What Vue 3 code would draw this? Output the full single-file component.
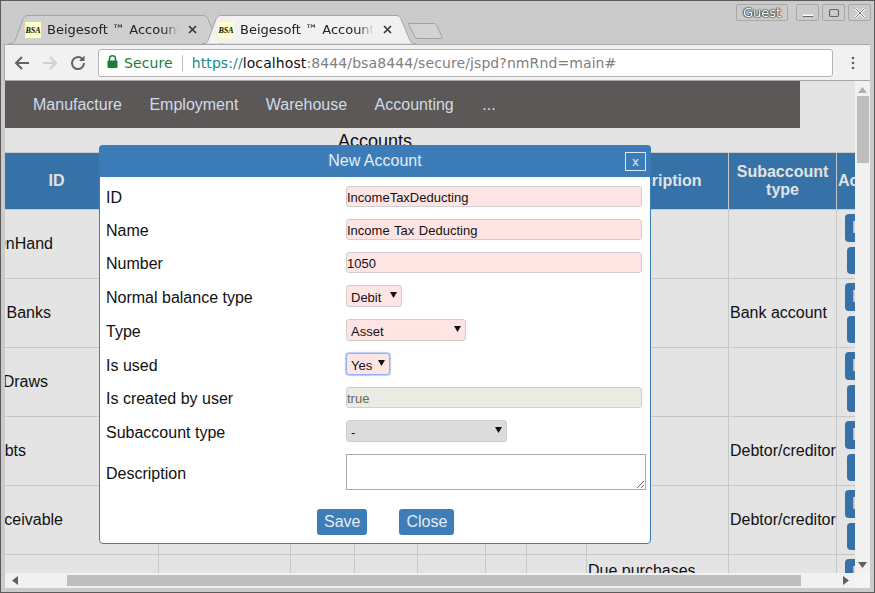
<script setup>
const tabs = [
  { id: 1, active: false },
  { id: 2, active: true }
]
const columns = [
  { label: 'ID', width: 204 },
  { label: 'Name', width: 132 },
  { label: 'Number', width: 64 },
  { label: 'Normal', width: 63 },
  { label: 'Type', width: 68 },
  { label: 'Used', width: 41 },
  { label: 'User', width: 60 },
  { label: 'Description', width: 142 },
  { label: 'Subaccount type', width: 108 },
  { label: 'Actions', width: 120 }
]
const rows = [
  { id: 'CashOnHand', pad: 104, sub: '', desc: '' },
  { id: 'Cash in Banks', pad: 106, sub: 'Bank account', desc: '' },
  { id: 'Owners Draws', pad: 109, sub: '', desc: '' },
  { id: 'Bad Debts', pad: 131, sub: 'Debtor/creditor', desc: '' },
  { id: 'AccountsReceivable', pad: 94, sub: 'Debtor/creditor', desc: '' },
  { id: '', pad: 2, sub: '', desc: 'Due purchases', tall: true }
]
const fields = [
  { label: 'ID', kind: 'input', value: 'IncomeTaxDeducting' },
  { label: 'Name', kind: 'input', value: 'Income Tax Deducting' },
  { label: 'Number', kind: 'input', value: '1050' },
  { label: 'Normal balance type', kind: 'select', value: 'Debit', cls: 'sel-debit' },
  { label: 'Type', kind: 'select', value: 'Asset', cls: 'sel-type' },
  { label: 'Is used', kind: 'select', value: 'Yes', cls: 'sel-used' },
  { label: 'Is created by user', kind: 'readonly', value: 'true' },
  { label: 'Subaccount type', kind: 'select', value: '-', cls: 'sel-sub' },
  { label: 'Description', kind: 'textarea', value: '' }
]
</script>

<template>
  <div class="window">
    <header class="titlebar">
      <div class="tabs">
        <div v-for="t in tabs" :key="t.id" class="tab" :class="{ active: t.active }">
          <svg class="tab-bg" width="214" height="29" viewBox="0 0 214 29">
            <path d="M0 28.5 L2 28.5 C4 28.5 5 27.5 6 25.5 L14 4 C15 2 16 0.5 19 0.5 L194 0.5 C197 0.5 198 2 199 4 L208 25.5 C209 27.5 210 28.5 212 28.5 L214 28.5" :fill="t.active ? '#f1f1f1' : '#cfcfcf'" stroke="#a5a5a5" />
          </svg>
          <span class="favicon">BSA</span>
          <span class="tab-title">Beigesoft ™ Accounting</span>
          <svg class="tab-x" width="9" height="9" viewBox="0 0 9 9"><path d="M1 1 L8 8 M8 1 L1 8" stroke="#333" stroke-width="1.6" /></svg>
        </div>
        <svg class="newtab" width="36" height="18" viewBox="0 0 36 18">
          <path d="M1 1.5 L25 1.5 C27 1.5 28 2 29 4 L34 15 C34.5 16 34 16.5 33 16.5 L10 16.5 C8 16.5 7.5 16 7 15 L1 3 C0.5 2 0.5 1.5 1 1.5 Z" fill="#d2d2d2" stroke="#a0a0a0" />
        </svg>
      </div>
      <div class="winctrls">
        <span class="guest">Guest</span>
        <span class="wbtn"><svg width="12" height="12" viewBox="0 0 12 12"><path d="M1 8.5 H11" stroke="#fff" stroke-width="2" /><path d="M1 9.5 H11" stroke="#666" /></svg></span>
        <span class="wbtn"><svg width="12" height="12" viewBox="0 0 12 12"><rect x="1.5" y="2.5" width="9" height="7" rx="1.5" fill="none" stroke="#666" stroke-width="1.2" /></svg></span>
        <span class="wbtn"><svg width="12" height="12" viewBox="0 0 12 12"><path d="M1.5 1.5 L10.5 10.5 M10.5 1.5 L1.5 10.5" stroke="#fff" stroke-width="2.4" /><path d="M1.5 1.5 L10.5 10.5 M10.5 1.5 L1.5 10.5" stroke="#777" stroke-width="1" /></svg></span>
      </div>
    </header>

    <div class="toolbar">
      <svg class="tb-icon" width="18" height="18" viewBox="0 0 18 18"><path d="M16 9 H3 M9 3 L3 9 L9 15" fill="none" stroke="#5f6368" stroke-width="2" /></svg>
      <svg class="tb-icon" width="18" height="18" viewBox="0 0 18 18"><path d="M2 9 H15 M9 3 L15 9 L9 15" fill="none" stroke="#d0d0d0" stroke-width="2" /></svg>
      <svg class="tb-icon" width="18" height="18" viewBox="0 0 18 18"><path d="M15 9 A6 6 0 1 1 13 4.6" fill="none" stroke="#5f6368" stroke-width="2" /><path d="M15.5 1.5 V7 H10 Z" fill="#5f6368" /></svg>
      <div class="omnibox">
        <svg class="lock" width="11" height="13" viewBox="0 0 11 13"><path d="M2.5 6 V3.8 A3 3 0 0 1 8.5 3.8 V6" fill="none" stroke="#188038" stroke-width="1.5" /><rect x="0.5" y="5.5" width="10" height="7.5" rx="1" fill="#188038" /></svg>
        <span class="secure">Secure</span>
        <span class="sep"></span>
        <span class="url"><span class="scheme">https://</span><span class="host">localhost</span>:8444/bsa8444/secure/jspd?nmRnd=main#</span>
      </div>
      <svg class="menu" width="4" height="14" viewBox="0 0 4 14"><circle cx="2" cy="2" r="1.3" fill="#5f6368" /><circle cx="2" cy="7" r="1.3" fill="#5f6368" /><circle cx="2" cy="12" r="1.3" fill="#5f6368" /></svg>
    </div>

    <div class="content">
      <main class="viewport">
        <nav class="nav">
          <a>Manufacture</a><a>Employment</a><a>Warehouse</a><a>Accounting</a><a class="more">...</a>
        </nav>
        <h3 class="heading">Accounts</h3>
        <table class="grid">
          <colgroup>
            <col v-for="c in columns" :key="c.label" :style="{ width: c.width + 'px' }" />
          </colgroup>
          <thead>
            <tr>
              <th v-for="c in columns" :key="c.label">{{ c.label }}</th>
            </tr>
          </thead>
          <tbody>
            <tr v-for="(r, i) in rows" :key="i" :class="{ tall: r.tall }">
              <td><div class="idcell" :style="{ paddingRight: r.pad + 'px' }"><span>{{ r.id }}</span></div></td>
              <td></td><td></td><td></td><td></td><td></td><td></td>
              <td>{{ r.desc }}</td>
              <td>{{ r.sub }}</td>
              <td class="actions">
                <span class="act first">Print</span>
                <span class="act second">Edit</span>
              </td>
            </tr>
          </tbody>
        </table>

        <section class="modal">
          <div class="modal-head">
            <span>New Account</span>
            <button class="modal-x">x</button>
          </div>
          <div class="modal-body">
            <div v-for="f in fields" :key="f.label" class="frow" :class="'k-' + f.kind">
              <label>{{ f.label }}</label>
              <div class="fval">
                <input v-if="f.kind === 'input'" class="inp" :value="f.value" />
                <input v-else-if="f.kind === 'readonly'" class="inp ro" :value="f.value" disabled />
                <div v-else-if="f.kind === 'select'" class="sel" :class="f.cls">
                  <span>{{ f.value }}</span>
                  <svg width="7" height="6" viewBox="0 0 7 6"><path d="M0 0 H7 L3.5 6 Z" fill="#111" /></svg>
                </div>
                <textarea v-else class="ta"></textarea>
              </div>
            </div>
            <div class="btns">
              <button class="btn">Save</button>
              <button class="btn">Close</button>
            </div>
          </div>
        </section>
      </main>

      <aside class="vscroll">
        <svg width="9" height="6" viewBox="0 0 9 6"><path d="M0 6 L4.5 0 L9 6 Z" fill="#b0b0b0" /></svg>
        <div class="vthumb"></div>
        <svg class="vdown" width="9" height="6" viewBox="0 0 9 6"><path d="M0 0 L4.5 6 L9 0 Z" fill="#606060" /></svg>
      </aside>
      <div class="hscroll">
        <svg width="6" height="9" viewBox="0 0 6 9"><path d="M6 0 L0 4.5 L6 9 Z" fill="#606060" /></svg>
        <div class="hthumb"></div>
        <svg width="6" height="9" viewBox="0 0 6 9"><path d="M0 0 L6 4.5 L0 9 Z" fill="#606060" /></svg>
      </div>
      <div class="corner"></div>
    </div>
  </div>
</template>

<style>
html, body { margin: 0; padding: 0; background: #cbcbcb; }
</style>

<style scoped>
.window {
  width: 875px;
  height: 593px;
  box-sizing: border-box;
  background: #cbcbcb;
  border: 1px solid #5a5a5a;
  padding: 0 4px 4px 3px;
  display: flex;
  flex-direction: column;
  overflow: hidden;
  font-family: "Liberation Sans", sans-serif;
}
.titlebar {
  height: 43px;
  flex: none;
  display: flex;
  justify-content: space-between;
  margin-right: -1px;
}
.tabs {
  display: flex;
  align-items: flex-start;
  padding: 14px 0 0 0;
}
.tab {
  position: relative;
  width: 193px;
  height: 29px;
  display: flex;
  align-items: center;
  padding-left: 21px;
  box-sizing: border-box;
}
.tab-bg { position: absolute; left: 5px; top: 0; }
.tab.active { z-index: 2; width: 204px; }
.favicon {
  position: relative;
  width: 16px;
  height: 16px;
  flex: none;
  background: #ffffc8;
  font: italic bold 8px/17px "Liberation Serif", serif;
  color: #111;
  text-align: center;
}
.tab-title {
  position: relative;
  font: 13px "DejaVu Sans", sans-serif;
  color: #222;
  width: 134px;
  margin-left: 6px;
  white-space: nowrap;
  overflow: hidden;
  -webkit-mask-image: linear-gradient(to right, #000 88%, transparent);
  mask-image: linear-gradient(to right, #000 88%, transparent);
}
.tab-x { position: relative; margin-left: 9px; flex: none; }
.newtab { margin: 7px 0 0 7px; }
.winctrls {
  display: flex;
  align-items: flex-start;
  gap: 3px;
  padding-top: 3px;
}
.guest {
  width: 50px;
  height: 15px;
  border: 1px solid #a8a8a8;
  border-radius: 2px;
  font: 13px/15px "DejaVu Sans", sans-serif;
  text-align: center;
  color: #fff;
  text-shadow: 0 0 1px #111, 0 0 1px #111, 0 0 2px #111;
  margin-right: 5px;
}
.wbtn {
  width: 23px;
  height: 17px;
  border: 1px solid #a8a8a8;
  border-radius: 2px;
  display: flex;
  align-items: center;
  justify-content: center;
  box-sizing: border-box;
}
.toolbar {
  height: 37px;
  flex: none;
  background: #f1f1f1;
  border: 1px solid #a8a8a8;
  border-width: 1px 0 1px 1px;
  box-sizing: border-box;
  display: flex;
  align-items: center;
  position: relative;
  padding-left: 8px;
  gap: 10px;
  z-index: 1;
}
.omnibox {
  width: 735px;
  height: 28px;
  box-sizing: border-box;
  margin-left: 1px;
  background: #fff;
  border: 1px solid #b4b4b4;
  border-radius: 3px;
  display: flex;
  align-items: center;
  padding-left: 8px;
  font: 14px "DejaVu Sans", sans-serif;
  letter-spacing: 0.1px;
  white-space: nowrap;
}
.lock { flex: none; margin-top: -2px; }
.secure { color: #188038; margin-left: 6px; }
.sep { width: 1px; height: 16px; background: #bbb; margin: 0 9px; }
.url { color: #808080; }
.scheme { color: #188a8a; }
.host { color: #111; }
.menu { margin-left: 8px; }
.content {
  flex: 1;
  min-height: 0;
  display: grid;
  grid-template-columns: 1fr 15px;
  grid-template-rows: 1fr 15px;
  margin-left: 1px;
  background: #f1f1f1;
}
.viewport {
  position: relative;
  overflow: hidden;
  background: #e4e4e4;
  min-width: 0;
}
.nav {
  width: 795px;
  height: 47px;
  background: #5c5857;
  display: flex;
  align-items: center;
  padding-left: 28px;
  box-sizing: border-box;
  gap: 27.5px;
  font-size: 16px;
  color: #cfdbe8;
}
.nav .more { color: #ddd; margin-left: 1px; }
.heading {
  margin: 3px 0 0;
  height: 21px;
  font: 400 18px/21px "Liberation Sans", sans-serif;
  text-align: center;
  width: 740px;
  color: #111;
}
.grid {
  margin: 0 0 0 -50px;
  width: 1002px;
  table-layout: fixed;
  border-collapse: separate;
  border-spacing: 0;
  font-size: 16px;
  color: #111;
}
.grid th {
  height: 58px;
  box-sizing: border-box;
  background: #3672a8;
  color: #e2e2e2;
  border-right: 1px solid #c8c8c8;
  border-top: 1px solid #c8c8c8;
  border-bottom: 1px solid #c8c8c8;
  padding: 0 1px;
  font-weight: 700;
  font-size: 16px;
  line-height: 18px;
}
.grid th:last-child { text-align: left; }
.grid td {
  height: 69px;
  box-sizing: border-box;
  border-right: 1px solid #c8c8c8;
  border-bottom: 1px solid #c8c8c8;
  padding: 1px;
  vertical-align: middle;
  white-space: nowrap;
}
.idcell {
  display: flex;
  justify-content: flex-end;
}
.idcell span { flex: none; }
.grid tr.tall td { height: 115px; vertical-align: top; padding-top: 7px; }
.grid td.actions {
  padding: 0;
  vertical-align: top;
  white-space: normal;
}
.grid tr.tall td.actions { padding-top: 0; }
.act {
  display: block;
  background: #3672a8;
  color: #e2e2e2;
  border-radius: 4px;
  width: 60px;
  box-sizing: border-box;
  font-size: 16px;
  padding-left: 7px;
}
.act.first { margin: 4px 0 0 8px; height: 28px; line-height: 28px; }
.act.second { margin: 5px 0 0 10px; height: 27px; padding-left: 12px; line-height: 27px; }
.modal {
  position: absolute;
  left: 94px;
  top: 64px;
  width: 552px;
  height: 399px;
  box-sizing: border-box;
  background: #fff;
  border: 1px solid #3c7db9;
  border-radius: 4px;
}
.modal-head {
  position: relative;
  height: 32px;
  margin: -1px -1px 0;
  background: #3c7db9;
  border-radius: 4px 4px 0 0;
  color: #e6ecf3;
  font-size: 16px;
  line-height: 31px;
  text-align: center;
}
.modal-x {
  position: absolute;
  right: 5px;
  top: 7px;
  width: 21px;
  height: 19px;
  background: #3c7db9;
  border: 1px solid #dfe8f1;
  color: #e6ecf3;
  padding: 0;
  font: 13px/16px "Liberation Sans", sans-serif;
}
.modal-body { padding: 9px 4px 0 6px; }
.frow {
  display: flex;
  height: 34px;
  color: #111;
  font-size: 16px;
}
.k-input, .k-readonly { height: 33px; }
.frow label { width: 240px; flex: none; line-height: 24px; }
.k-select label { line-height: 26px; }
.inp {
  display: block;
  width: 296px;
  height: 21px;
  box-sizing: border-box;
  background: #ffe4e4;
  border: 1px solid #cfcfcf;
  border-radius: 3px;
  padding: 2px 0 0;
  margin: 0;
  font: 13px "Liberation Sans", sans-serif;
  word-spacing: 1px;
  color: #111;
  outline: none;
}
.inp.ro { background: #ebebe4; color: #666; }
.sel {
  height: 22px;
  box-sizing: border-box;
  background: #ffe4e4;
  border: 1px solid #cfcfcf;
  border-radius: 3px;
  font-size: 13px;
  display: flex;
  align-items: center;
  justify-content: space-between;
  padding: 3px 4px 0 4px;
}
.sel svg { margin-top: -6px; }
.sel-debit { width: 56px; }
.sel-type { width: 120px; }
.sel-used {
  width: 44px;
  border: 1px solid #8fb4f5;
  box-shadow: 0 0 1px 1px #b5cdf7;
}
.sel-sub { width: 161px; background: #dcdcdc; }
.ta {
  display: block;
  width: 300px;
  height: 36px;
  box-sizing: border-box;
  border: 1px solid #a9a9a9;
  padding: 2px;
  margin: 0;
  background: #fff;
}
.k-textarea { height: 43px; }
.k-textarea label { line-height: 40px; }
.btns {
  display: flex;
  gap: 32px;
  padding: 12px 0 0 211px;
}
.btn {
  height: 26px;
  background: #3d7eb8;
  color: #e6ecf3;
  border: 0;
  border-radius: 3px;
  padding: 0 7px;
  font: 16px "Liberation Sans", sans-serif;
}
.vscroll {
  background: #f1f1f1;
  display: flex;
  flex-direction: column;
  align-items: center;
  padding-top: 6px;
  position: relative;
}
.vthumb {
  width: 12px;
  height: 67px;
  background: #bebebe;
  margin-top: 3px;
}
.vdown { position: absolute; bottom: 5px; left: 3px; }
.hscroll {
  background: #f1f1f1;
  display: flex;
  align-items: center;
  padding-left: 7px;
}
.hthumb {
  width: 734px;
  height: 11px;
  background: #bebebe;
  margin: 0 42px 0 49px;
}
.corner { background: #f5f5f5; }
</style>
